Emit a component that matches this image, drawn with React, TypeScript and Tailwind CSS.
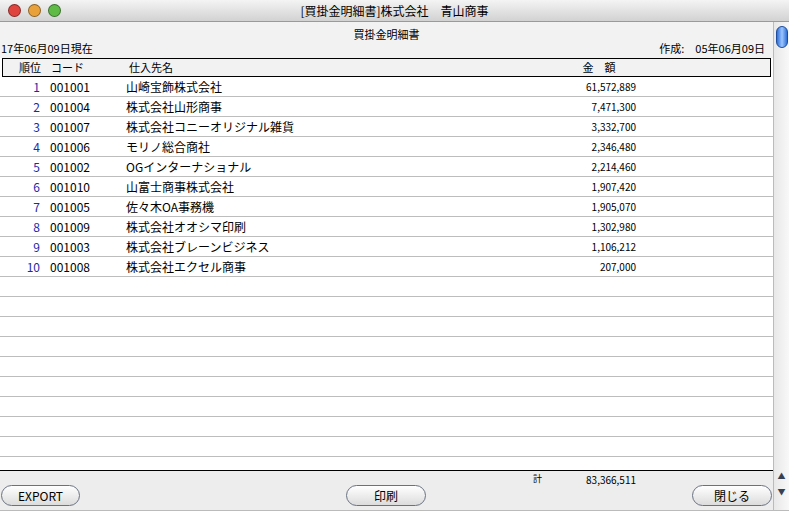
import React from 'react';

const rows = [
  ['1', '001001', '山崎宝飾株式会社', '61,572,889'],
  ['2', '001004', '株式会社山形商事', '7,471,300'],
  ['3', '001007', '株式会社コニーオリジナル雑貨', '3,332,700'],
  ['4', '001006', 'モリノ総合商社', '2,346,480'],
  ['5', '001002', 'OGインターナショナル', '2,214,460'],
  ['6', '001010', '山富士商事株式会社', '1,907,420'],
  ['7', '001005', '佐々木OA事務機', '1,905,070'],
  ['8', '001009', '株式会社オオシマ印刷', '1,302,980'],
  ['9', '001003', '株式会社ブレーンビジネス', '1,106,212'],
  ['10', '001008', '株式会社エクセル商事', '207,000'],
];

const font = { fontFamily: '"Noto Sans CJK JP", "Liberation Sans", sans-serif' };

function Light({ c }: { c: string }) {
  return <span className={`w-[13px] h-[13px] rounded-full border border-black/40 ${c}`} />;
}

function Btn({ children, w }: { children: React.ReactNode; w: string }) {
  return (
    <button className={`${w} h-[21px] rounded-full border border-gray-500 bg-gradient-to-b from-white to-[#dcdcdc] text-[12px] text-black`}>
      {children}
    </button>
  );
}

export default function App() {
  return (
    <div className="w-[789px] h-[523px] flex flex-col bg-[#ececec] overflow-hidden" style={font}>
      {/* title bar */}
      <div className="h-[22px] shrink-0 flex items-center px-2 bg-gradient-to-b from-[#f4f4f4] to-[#d2d2d2] border-b border-[#9a9a9a] relative">
        <div className="flex gap-[7px]">
          <Light c="bg-[#e0443e]" />
          <Light c="bg-[#e9a23b]" />
          <Light c="bg-[#5fba46]" />
        </div>
        <div className="absolute inset-0 flex items-center justify-center text-[12px] text-black">
          [買掛金明細書]株式会社　青山商事
        </div>
      </div>
      <div className="flex flex-1 min-h-0">
        <div className="flex-1 flex flex-col bg-white min-h-0">
          {/* report header */}
          <div className="h-[36px] shrink-0 bg-[#f2f2f2] relative text-[11px] text-black">
            <div className="absolute top-[4px] left-0 right-0 text-center">買掛金明細書</div>
            <div className="absolute bottom-[2px] left-[1px]">17年06月09日現在</div>
            <div className="absolute bottom-[2px] right-[8px]">作成:　05年06月09日</div>
          </div>
          <div className="mx-[2px] h-[19px] shrink-0 border border-black bg-[#f2f2f2] flex items-center text-[11px] text-black">
            <span className="w-[38px] text-right">順位</span>
            <span className="w-[88px] pl-[10px]">コード</span>
            <span className="w-[440px]">仕入先名</span>
            <span className="w-[60px] text-center">金　額</span>
          </div>
          <div className="flex-1 min-h-0 overflow-hidden">
            {rows.map(r => (
              <div key={r[1]} className="h-[20px] flex items-center border-b border-[#bdbdbd] text-[12px] text-black">
                <span className="w-[40px] text-right text-[#1c2aa8]">{r[0]}</span>
                <span className="w-[86px] pl-[10px]">{r[1]}</span>
                <span className="w-[440px]">{r[2]}</span>
                <span className="w-[70px] text-right text-[10px]">{r[3]}</span>
              </div>
            ))}
            {Array.from({ length: 10 }).map((_, i) => (
              <div key={i} className="h-[20px] border-b border-[#bdbdbd]" />
            ))}
          </div>
          {/* footer */}
          <div className="h-[40px] shrink-0 border-t border-black bg-[#ededed] relative">
            <div className="absolute top-[1px] left-[533px] text-[9px]">計</div>
            <div className="absolute top-[1px] right-[137px] text-[10px]">83,366,511</div>
            <div className="absolute bottom-[4px] left-0 right-0 flex justify-between px-[1px] items-center">
              <Btn w="w-[79px]">EXPORT</Btn>
              <Btn w="w-[80px]">印刷</Btn>
              <Btn w="w-[80px]">閉じる</Btn>
            </div>
          </div>
        </div>
        {/* scrollbar */}
        <div className="w-[16px] shrink-0 bg-gradient-to-r from-[#e8e8e8] to-[#f8f8f8] border-l border-[#bbb] flex flex-col">
          <div className="mx-auto mt-[4px] w-[12px] h-[22px] rounded-full bg-gradient-to-r from-[#2f6fd6] via-[#9cc6ff] to-[#2f6fd6] border border-[#1d4d9c]" />
          <div className="flex-1" />
          <div className="h-[16px] text-[8px] text-center text-gray-700">▲</div>
          <div className="h-[16px] text-[8px] text-center text-gray-700">▼</div>
          <div className="h-[8px]" />
        </div>
      </div>
      <div className="h-[13px] shrink-0 bg-white border-t border-[#bbb]" />
    </div>
  );
}
